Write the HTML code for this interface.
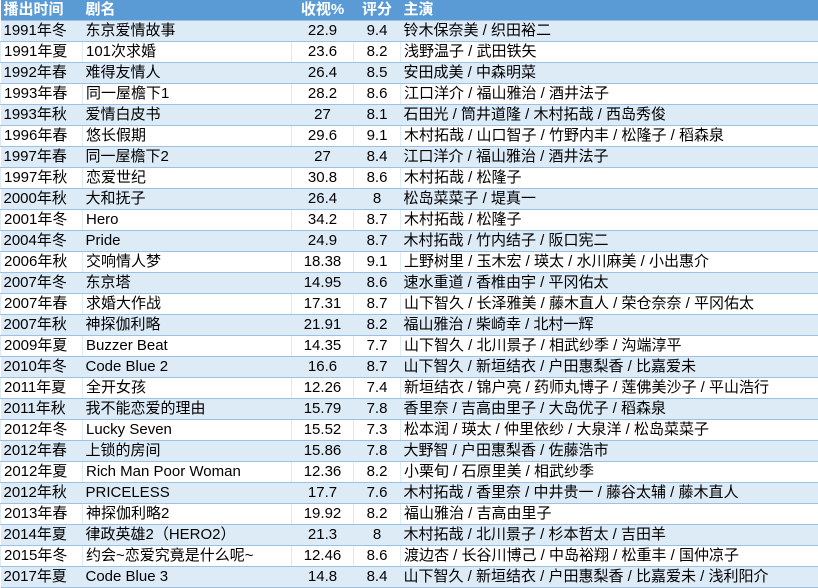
<!DOCTYPE html><html><head><meta charset="utf-8"><style>
body{margin:0;width:818px;height:588px;overflow:hidden;background:#fff;font-family:"Liberation Sans","Noto Sans CJK SC",sans-serif;font-size:15px;color:#000}
table{border-collapse:collapse;table-layout:fixed;width:818px}
td,th{height:20px;padding:0 0 0 3px;white-space:nowrap;overflow:hidden;border-bottom:1px solid #9bc2e6;line-height:20px}
th{background:#5b9bd5;color:#fff;font-weight:bold;text-align:left;height:20px;border-bottom:1px solid #9bc2e6;font-size:15px}
tr:nth-child(even) td{background:#ddebf7}
tr:nth-child(odd) td{background:#fff;border-left:1px solid #ddebf7}
td.n,th.n{text-align:center;padding:0}
</style></head><body><table>
<colgroup><col style="width:82px"><col style="width:209px"><col style="width:62px"><col style="width:47px"><col></colgroup>
<tr><th>播出时间</th><th>剧名</th><th class="n">收视%</th><th class="n">评分</th><th>主演</th></tr>
<tr><td>1991年冬</td><td>东京爱情故事</td><td class="n">22.9</td><td class="n">9.4</td><td>铃木保奈美 / 织田裕二</td></tr>
<tr><td>1991年夏</td><td>101次求婚</td><td class="n">23.6</td><td class="n">8.2</td><td>浅野温子 / 武田铁矢</td></tr>
<tr><td>1992年春</td><td>难得友情人</td><td class="n">26.4</td><td class="n">8.5</td><td>安田成美 / 中森明菜</td></tr>
<tr><td>1993年春</td><td>同一屋檐下1</td><td class="n">28.2</td><td class="n">8.6</td><td>江口洋介 / 福山雅治 / 酒井法子</td></tr>
<tr><td>1993年秋</td><td>爱情白皮书</td><td class="n">27</td><td class="n">8.1</td><td>石田光 / 筒井道隆 / 木村拓哉 / 西岛秀俊</td></tr>
<tr><td>1996年春</td><td>悠长假期</td><td class="n">29.6</td><td class="n">9.1</td><td>木村拓哉 / 山口智子 / 竹野内丰 / 松隆子 / 稻森泉</td></tr>
<tr><td>1997年春</td><td>同一屋檐下2</td><td class="n">27</td><td class="n">8.4</td><td>江口洋介 / 福山雅治 / 酒井法子</td></tr>
<tr><td>1997年秋</td><td>恋爱世纪</td><td class="n">30.8</td><td class="n">8.6</td><td>木村拓哉 / 松隆子</td></tr>
<tr><td>2000年秋</td><td>大和抚子</td><td class="n">26.4</td><td class="n">8</td><td>松岛菜菜子 / 堤真一</td></tr>
<tr><td>2001年冬</td><td>Hero</td><td class="n">34.2</td><td class="n">8.7</td><td>木村拓哉 / 松隆子</td></tr>
<tr><td>2004年冬</td><td>Pride</td><td class="n">24.9</td><td class="n">8.7</td><td>木村拓哉 / 竹内结子 / 阪口宪二</td></tr>
<tr><td>2006年秋</td><td>交响情人梦</td><td class="n">18.38</td><td class="n">9.1</td><td>上野树里 / 玉木宏 / 瑛太 / 水川麻美 / 小出惠介</td></tr>
<tr><td>2007年冬</td><td>东京塔</td><td class="n">14.95</td><td class="n">8.6</td><td>速水重道 / 香椎由宇 / 平冈佑太</td></tr>
<tr><td>2007年春</td><td>求婚大作战</td><td class="n">17.31</td><td class="n">8.7</td><td>山下智久 / 长泽雅美 / 藤木直人 / 荣仓奈奈 / 平冈佑太</td></tr>
<tr><td>2007年秋</td><td>神探伽利略</td><td class="n">21.91</td><td class="n">8.2</td><td>福山雅治 / 柴崎幸 / 北村一辉</td></tr>
<tr><td>2009年夏</td><td>Buzzer Beat</td><td class="n">14.35</td><td class="n">7.7</td><td>山下智久 / 北川景子 / 相武纱季 / 沟端淳平</td></tr>
<tr><td>2010年冬</td><td>Code Blue 2</td><td class="n">16.6</td><td class="n">8.7</td><td>山下智久 / 新垣结衣 / 户田惠梨香 / 比嘉爱未</td></tr>
<tr><td>2011年夏</td><td>全开女孩</td><td class="n">12.26</td><td class="n">7.4</td><td>新垣结衣 / 锦户亮 / 药师丸博子 / 莲佛美沙子 / 平山浩行</td></tr>
<tr><td>2011年秋</td><td>我不能恋爱的理由</td><td class="n">15.79</td><td class="n">7.8</td><td>香里奈 / 吉高由里子 / 大岛优子 / 稻森泉</td></tr>
<tr><td>2012年冬</td><td>Lucky Seven</td><td class="n">15.52</td><td class="n">7.3</td><td>松本润 / 瑛太 / 仲里依纱 / 大泉洋 / 松岛菜菜子</td></tr>
<tr><td>2012年春</td><td>上锁的房间</td><td class="n">15.86</td><td class="n">7.8</td><td>大野智 / 户田惠梨香 / 佐藤浩市</td></tr>
<tr><td>2012年夏</td><td>Rich Man Poor Woman</td><td class="n">12.36</td><td class="n">8.2</td><td>小栗旬 / 石原里美 / 相武纱季</td></tr>
<tr><td>2012年秋</td><td>PRICELESS</td><td class="n">17.7</td><td class="n">7.6</td><td>木村拓哉 / 香里奈 / 中井贵一 / 藤谷太辅 / 藤木直人</td></tr>
<tr><td>2013年春</td><td>神探伽利略2</td><td class="n">19.92</td><td class="n">8.2</td><td>福山雅治 / 吉高由里子</td></tr>
<tr><td>2014年夏</td><td>律政英雄2（HERO2）</td><td class="n">21.3</td><td class="n">8</td><td>木村拓哉 / 北川景子 / 杉本哲太 / 吉田羊</td></tr>
<tr><td>2015年冬</td><td>约会~恋爱究竟是什么呢~</td><td class="n">12.46</td><td class="n">8.6</td><td>渡边杏 / 长谷川博己 / 中岛裕翔 / 松重丰 / 国仲凉子</td></tr>
<tr><td>2017年夏</td><td>Code Blue 3</td><td class="n">14.8</td><td class="n">8.4</td><td>山下智久 / 新垣结衣 / 户田惠梨香 / 比嘉爱未 / 浅利阳介</td></tr>
</table></body></html>
